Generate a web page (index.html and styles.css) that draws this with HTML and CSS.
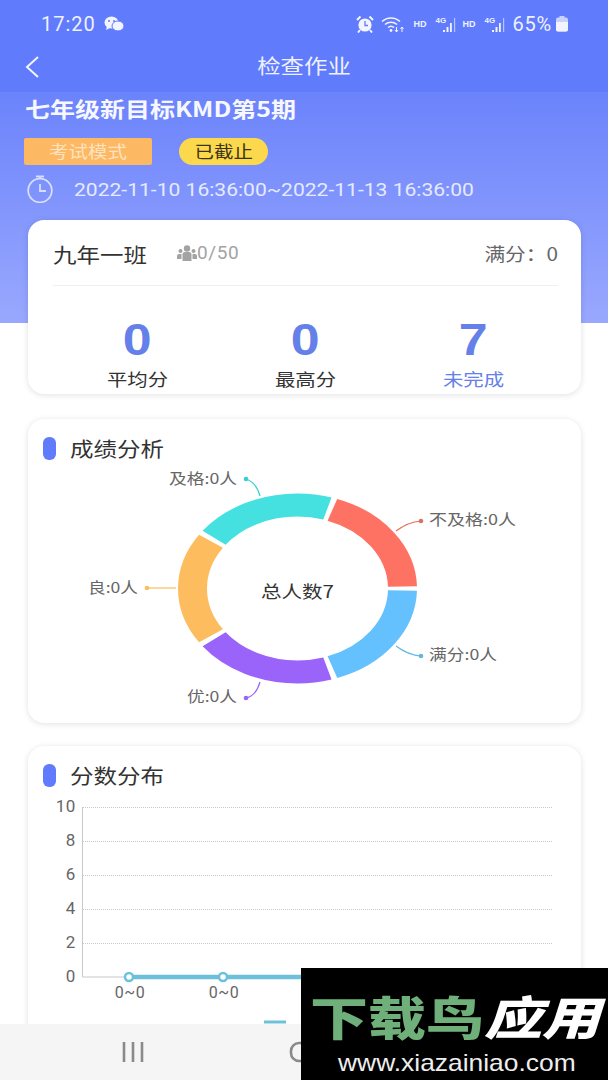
FILE: index.html
```html
<!DOCTYPE html>
<html lang="zh">
<head>
<meta charset="utf-8">
<title>检查作业</title>
<link rel="stylesheet" href="styles.css">
</head>
<body>
<div class="page">
  <header class="top">
    <div class="status">
      <span class="clock">17:20</span>
      <svg class="wechat" viewBox="0 0 20 16"><ellipse cx="7.500" cy="6.500" rx="7" ry="6" fill="#f2f4ff"/><path d="M3 10l-1 4 4-2z" fill="#f2f4ff"/><ellipse cx="14" cy="10" rx="6" ry="5" fill="#f2f4ff" stroke="#607bfb"/><circle cx="5" cy="5" r="1" fill="#607bfb"/><circle cx="10" cy="5" r="1" fill="#607bfb"/></svg>
      <span class="spacer"></span>
      <svg class="alarm" viewBox="0 0 18 18"><circle cx="9" cy="10" r="6.600" fill="#f2f4ff"/><path d="M9 6v4.500h3" fill="none" stroke="#607bfb" stroke-width="1.300"/><path d="M1 5l3.500-3.500M17 5l-3.500-3.500M4 15l-2 2.500M14 15l2 2.500" stroke="#f2f4ff" stroke-width="2"/></svg>
      <svg class="wifi" viewBox="0 0 23 18"><path d="M1 6.500a13 13 0 0 1 18 0M4 9.500a9 9 0 0 1 12 0M7 12.500a4.500 4.500 0 0 1 6 0" fill="none" stroke="#f2f4ff" stroke-width="1.500"/><circle cx="10" cy="15.500" r="1.400" fill="#f2f4ff"/><path d="M15.500 12v5M21 17v-5M19.500 14l1.500-2 1.500 2M14 15l1.500 2 1.500-2" fill="none" stroke="#f2f4ff" stroke-width="1"/></svg>
      <span class="hd">HD</span>
      <span class="net"><span class="fourg">4G</span><svg class="bars" viewBox="0 0 14 14"><path d="M1 12h2v2H1zM4.500 9h2v5h-2zM8 5h1.800v9H8z" fill="#f2f4ff"/><path d="M12 0h1.200v14H12z" fill="#f2f4ff" opacity=".6"/></svg></span>
      <span class="hd hd-two">HD</span>
      <span class="net"><span class="fourg">4G</span><svg class="bars" viewBox="0 0 14 14"><path d="M1 12h2v2H1zM4.500 9h2v5h-2zM8 5h1.800v9H8z" fill="#f2f4ff"/><path d="M12 0h1.200v14H12z" fill="#f2f4ff" opacity=".6"/></svg></span>
      <span class="pct">65%</span>
      <svg class="battery" viewBox="0 0 12 16"><path d="M3.500 0h5v2h-5z" fill="#c9d2fd"/><rect y="1.500" width="12" height="14" rx="2" fill="#c9d2fd"/><path d="M0 6h12v7.500a2 2 0 0 1-2 2H2a2 2 0 0 1-2-2z" fill="#f2f4ff"/></svg>
    </div>
    <div class="navbar">
      <svg class="back" viewBox="0 0 16 24"><path d="M14 2L3 12l11 10" fill="none" stroke="#f2f4ff" stroke-width="2"/></svg>
      <h1 class="page-title">检查作业</h1>
    </div>
  </header>

  <main class="main">
    <h2 class="hw-title">七年级新目标KMD第5期</h2>
    <div class="tags">
      <span class="tag-mode"><span class="tag-text">考试模式</span></span>
      <span class="tag-state"><span class="tag-text">已截止</span></span>
    </div>
    <div class="time-row">
      <svg class="timer" viewBox="0 0 28 28"><circle cx="14" cy="15.500" r="11.800" fill="none" stroke="#d6ddfe" stroke-width="1.800"/><path d="M14 9v7h6M10 1.500h8M14 1.500v2.500" fill="none" stroke="#d6ddfe" stroke-width="1.800"/></svg>
      <span class="time-text">2022-11-10 16:36:00~2022-11-13 16:36:00</span>
    </div>

    <section class="card summary">
      <div class="summary-head">
        <span class="class-name">九年一班</span>
        <svg class="people" viewBox="0 0 20 16"><circle cx="10" cy="3.500" r="3.200" fill="#a3a3a3"/><path d="M5.500 16V9.500a2.500 2.500 0 0 1 2.500-2.500h4a2.500 2.500 0 0 1 2.500 2.500V16z" fill="#a3a3a3"/><circle cx="3.500" cy="6" r="2" fill="#a3a3a3"/><circle cx="16.500" cy="6" r="2" fill="#a3a3a3"/><path d="M0 14v-3a2 2 0 0 1 2-2h2.500v5zM20 14v-3a2 2 0 0 0-2-2h-2.500v5z" fill="#a3a3a3"/></svg>
        <span class="count">0/50</span>
        <span class="spacer"></span>
        <span class="full">满分：0</span>
      </div>
      <div class="stats">
        <div class="stat"><b class="num">0</b><span class="lbl">平均分</span></div>
        <div class="stat"><b class="num">0</b><span class="lbl">最高分</span></div>
        <div class="stat"><b class="num">7</b><span class="lbl lbl-blue">未完成</span></div>
      </div>
    </section>

    <section class="card analysis">
      <h3 class="card-title"><i class="bullet"></i><span class="card-name">成绩分析</span></h3>
      <svg class="donut" viewBox="28 464 553 259">
        <g transform="translate(297.500 588.500) scale(1 .795)" fill="none" stroke-width="29">
          <circle r="105" pathLength="100" stroke="#64c1fd" stroke-dasharray="19.200 80.800" stroke-dashoffset="-0.400"/>
          <circle r="105" pathLength="100" stroke="#9a64fb" stroke-dasharray="19.200 80.800" stroke-dashoffset="-20.400"/>
          <circle r="105" pathLength="100" stroke="#fdbd5f" stroke-dasharray="19.200 80.800" stroke-dashoffset="-40.400"/>
          <circle r="105" pathLength="100" stroke="#45e0e0" stroke-dasharray="19.200 80.800" stroke-dashoffset="-60.400"/>
          <circle r="105" pathLength="100" stroke="#fd7263" stroke-dasharray="19.200 80.800" stroke-dashoffset="-80.400"/>
        </g>
        <g fill="none" stroke-width="1.200">
          <path d="M396 531q12-9 25-10" stroke="#e0705f"/>
          <path d="M396 646q12 9 25 10" stroke="#5fb8e0"/>
          <path d="M260 682q-4 14-14 16" stroke="#9a64fb"/>
          <path d="M176 588h-29" stroke="#fdbd5f"/>
          <path d="M260 496q-4-14-14-17" stroke="#38cfcf"/>
        </g>
        <circle cx="421" cy="521" r="2.300" fill="#e0705f"/>
        <circle cx="421" cy="656" r="2.300" fill="#5fb8e0"/>
        <circle cx="246" cy="698" r="2.300" fill="#9a64fb"/>
        <circle cx="147" cy="588" r="2.300" fill="#fdbd5f"/>
        <circle cx="246" cy="479" r="2.300" fill="#38cfcf"/>
        <text class="pie-label" x="429" y="525" textLength="87" lengthAdjust="spacingAndGlyphs">不及格:0人</text>
        <text class="pie-label" x="429" y="660" textLength="68" lengthAdjust="spacingAndGlyphs">满分:0人</text>
        <text class="pie-label" x="187" y="702" textLength="50" lengthAdjust="spacingAndGlyphs">优:0人</text>
        <text class="pie-label" x="88" y="593" textLength="50" lengthAdjust="spacingAndGlyphs">良:0人</text>
        <text class="pie-label" x="169" y="484" textLength="68" lengthAdjust="spacingAndGlyphs">及格:0人</text>
        <text class="pie-center" x="261" y="598" textLength="73" lengthAdjust="spacingAndGlyphs">总人数7</text>
      </svg>
    </section>

    <section class="card dist">
      <h3 class="card-title"><i class="bullet"></i><span class="card-name">分数分布</span></h3>
      <svg class="line" viewBox="28 796 553 250">
        <g class="grid">
          <path d="M83 807.500h469M83 841.500h469M83 875.500h469M83 909.500h469M83 943.500h469"/>
        </g>
        <path d="M82.500 807v170h60" fill="none" stroke="#c8c8c8" stroke-width="1"/>
        <path d="M129 977H330" stroke="#6cc0dc" stroke-width="4.500"/>
        <circle cx="129" cy="977" r="4" fill="#fff" stroke="#6cc0dc" stroke-width="2.500"/>
        <circle cx="223" cy="977" r="4" fill="#fff" stroke="#6cc0dc" stroke-width="2.500"/>
        <text class="axis" x="76" y="812" text-anchor="end">10</text>
        <text class="axis" x="76" y="846" text-anchor="end">8</text>
        <text class="axis" x="76" y="880" text-anchor="end">6</text>
        <text class="axis" x="76" y="914" text-anchor="end">4</text>
        <text class="axis" x="76" y="948" text-anchor="end">2</text>
        <text class="axis" x="76" y="982" text-anchor="end">0</text>
        <text class="axis axis-x" x="130" y="998" text-anchor="middle">0~0</text>
        <text class="axis axis-x" x="224" y="998" text-anchor="middle">0~0</text>
        <path d="M264 1022h22" stroke="#6cc0dc" stroke-width="3"/>
      </svg>
    </section>
  </main>

  <nav class="sysnav">
    <svg class="recent" viewBox="0 0 24 22"><path d="M3 1v20M12 1v20M21 1v20" stroke="#8a8a8a" stroke-width="2.600"/></svg>
    <svg class="home" viewBox="0 0 24 22"><rect x="2" y="2" width="20" height="18" rx="8" fill="none" stroke="#8a8a8a" stroke-width="2.600"/></svg>
  </nav>

  <aside class="mark">
    <div class="mark-cn"><span class="mark-green">下载鸟</span><span class="mark-white">应用</span></div>
    <div class="mark-url">www.xiazainiao.com</div>
  </aside>
</div>
</body>
</html>
```

FILE: styles.css
```css
* { box-sizing: border-box; }
html, body { margin: 0; padding: 0; }
body {
  width: 608px;
  height: 1080px;
  overflow: hidden;
  font-family: "Noto Sans CJK SC", "Noto Sans", sans-serif;
  color: #333;
  background: #fff;
}
h1, h2, h3 { margin: 0; font-weight: 400; }
.spacer { flex: 1; }
.page { position: relative; width: 608px; height: 1080px; overflow: hidden; }

.top { height: 92px; background: #607bfb; color: #eef1ff; }
.status { display: flex; align-items: center; height: 47px; padding: 0 40px 0 41px; }
.clock { font: 20px Roboto, sans-serif; letter-spacing: 1px; margin-right: 8px; }
.wechat { width: 20px; height: 16px; }
.alarm { width: 18px; height: 18px; margin-right: 7px; }
.wifi { width: 23px; height: 18px; margin-right: 9px; }
.hd { font: 700 9px "Liberation Sans", sans-serif; width: 16px; margin-right: 6px; }
.hd-two { margin-left: 6px; }
.net { position: relative; display: block; width: 21px; height: 16px; }
.fourg { position: absolute; left: 0; top: 0; font: 700 8px/9px "Liberation Sans", sans-serif; }
.bars { position: absolute; right: 0; bottom: 0; width: 14px; height: 14px; }
.pct { font: 20px Roboto, sans-serif; letter-spacing: .8px; margin: 0 4px 0 7px; }
.battery { width: 12px; height: 16px; }

.navbar { position: relative; display: flex; justify-content: center; align-items: center; height: 39px; }
.back { position: absolute; left: 24px; top: 8px; width: 16px; height: 24px; }
.page-title { font-size: 20px; line-height: 37px; height: 39px; color: #eef1ff; transform: scaleX(1.17); }

.main {
  padding: 2px 27px 0 28px;
  height: 988px;
  background: linear-gradient(#6b83fb, #99a8fe) top / 100% 231px no-repeat;
}
.hw-title { margin-left: -3px; font-size: 21px; font-weight: 700; line-height: 29px; color: #f7f8ff; white-space: nowrap; transform: scaleX(1.19); transform-origin: left center; }
.tags { display: flex; align-items: center; gap: 27px; margin: 15px 0 0 -4px; height: 27px; }
.tag-mode {
  display: block; width: 128px; height: 27px; line-height: 27px; text-align: center;
  background: #fdb863; border-radius: 2px; color: #fde3c0; font-size: 16.500px;
}
.tag-state {
  display: block; width: 89px; height: 27px; line-height: 27px; text-align: center;
  background: #fcd84c; border-radius: 14px; color: #3a3418; font-size: 16.500px;
}
.tag-text { display: inline-block; transform: scaleX(1.18); }
.time-row { display: flex; align-items: center; height: 32px; margin: 8px 0 0 -2px; }
.timer { width: 28px; height: 28px; margin-right: 20px; }
.time-text { font: 18px Roboto, sans-serif; color: #e6eaff; white-space: nowrap; transform: scaleX(1.17); transform-origin: left center; }

.card { background: #fff; border-radius: 16px; box-shadow: 0 1px 6px rgba(0, 0, 0, .12); }
.summary { height: 174px; margin-top: 15px; padding: 0 23px 0 25px; }
.summary-head { display: flex; align-items: center; height: 66px; border-bottom: 1px solid #f0f0f0; }
.class-name { font-size: 20px; line-height: 28px; margin: 5px 44px 0 0; color: #333; transform: scaleX(1.175); transform-origin: left center; }
.people { width: 20px; height: 16px; margin-left: 0; }
.count { font: 19px Roboto, sans-serif; letter-spacing: .6px; color: #a3a3a3; }
.full { font-size: 18px; color: #666; transform: scaleX(1.15); transform-origin: right center; }
.stats { display: grid; grid-template-columns: repeat(3, 168px); }
.stat { display: flex; flex-direction: column; align-items: center; }
.num { font: 700 44px/50px "Liberation Sans", sans-serif; color: #6580e8; margin-top: 29px; transform: scaleX(1.18); }
.lbl { font-size: 17px; line-height: 24px; color: #333; margin-top: 2px; transform: scaleX(1.2); }
.lbl-blue { color: #6580e8; }

.card-title { display: flex; align-items: center; height: 24px; font-size: 20px; color: #333; }
.card-name { display: block; line-height: 24px; margin-top: 2px; transform: scaleX(1.175); transform-origin: left center; }
.bullet { display: block; width: 13px; height: 23px; margin: 0 14px 0 15px; background: #607bfb; border-radius: 6px; }
.analysis { height: 304px; margin-top: 25px; padding-top: 17px; }
.donut { display: block; width: 553px; height: 259px; margin-top: 4px; }
.pie-label { font-size: 15px; fill: #666; }
.pie-center { font-size: 17px; fill: #333; }

.dist { height: 320px; margin-top: 23px; padding-top: 17px; }
.line { display: block; width: 553px; height: 250px; margin-top: 9px; overflow: hidden; }
.grid path { stroke: #c9c9c9; stroke-width: 1; stroke-dasharray: 1 1; fill: none; }
.axis { font: 17px Roboto, sans-serif; letter-spacing: .6px; fill: #666; }
.axis-x { font-size: 16px; }

.sysnav { position: absolute; left: 0; right: 0; bottom: 0; height: 56px; background: #f5f5f5; display: flex; align-items: center; }
.recent { width: 24px; height: 22px; margin-left: 121px; }
.home { width: 24px; height: 22px; margin-left: 144px; }

.mark { position: absolute; left: 301px; top: 968px; width: 307px; height: 112px; background: #000; overflow: hidden; }
.mark-cn { width: 230px; height: 78px; margin-left: 9px; padding-top: 17px; white-space: nowrap; font-size: 46px; line-height: 60px; font-weight: 900; transform: scaleX(1.26); transform-origin: left center; }
.mark-green { color: #6fb07a; }
.mark-white { color: #fff; font-style: italic; }
.mark-url { width: 216px; margin: 2px 0 0 37px; font: 24px/30px "Liberation Sans", sans-serif; color: #eee; white-space: nowrap; transform: scaleX(1.1); transform-origin: left center; }
```
